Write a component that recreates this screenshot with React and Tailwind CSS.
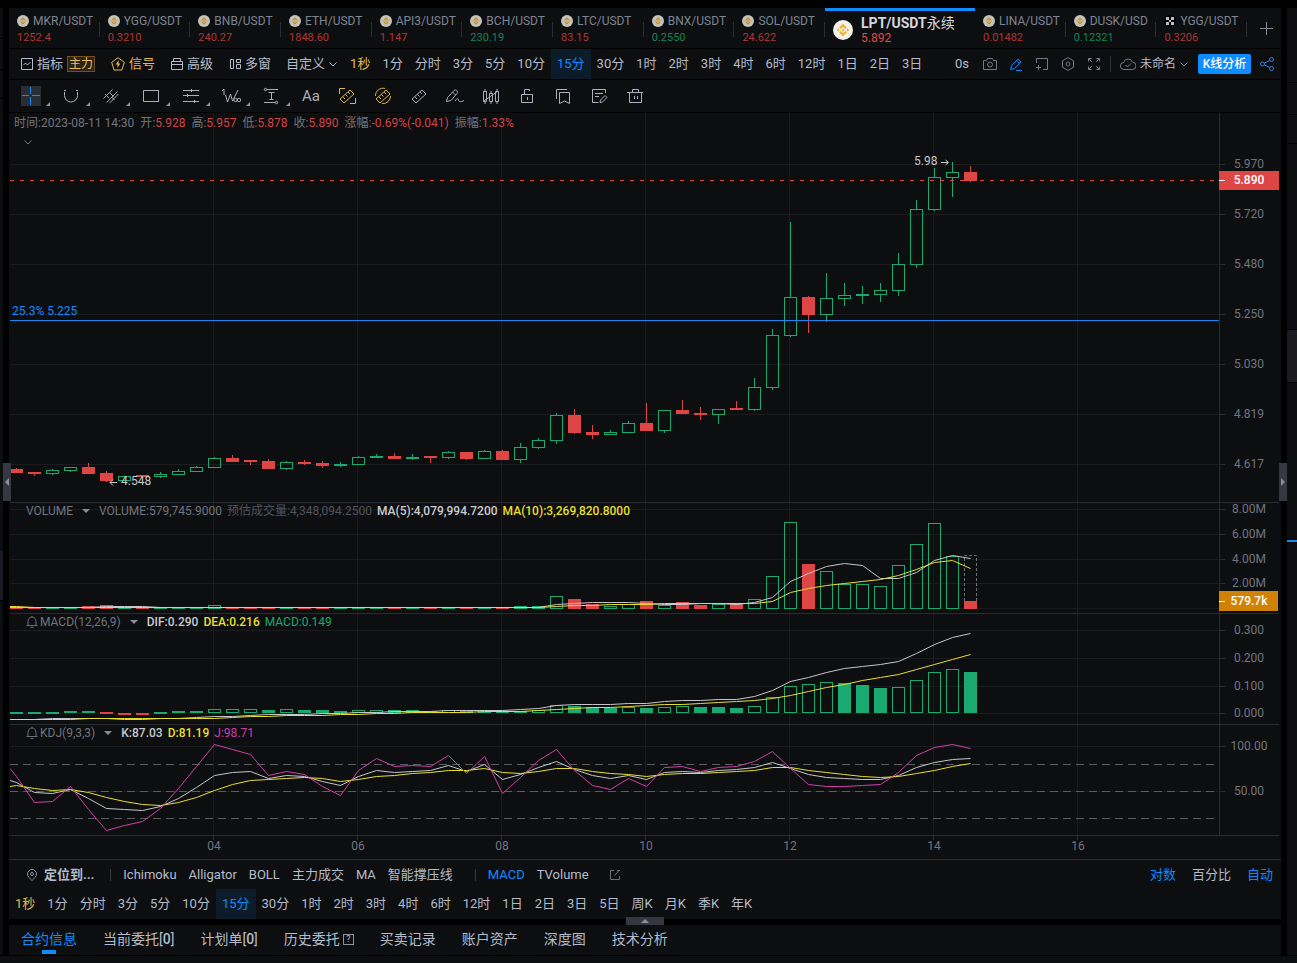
import { useState } from 'react';

const STEP = 18;
const PLOT_COLUMNS = [203, 347, 491, 635, 779, 923, 1067];
const HOURS = ['04', '06', '08', '10', '12', '14', '16'];

const GREEN = '#1aaa71';
const RED = '#de4646';
const WHITE = '#c4c6ca';
const YELLOW = '#e9df2b';
const PINK = '#d03fa8';

// direction, body top, body bottom, high, low
const candles = [
  ['d', 469, 473, 468, 473], ['d', 472, 474, 472, 476], ['u', 470, 474, 469, 475], ['u', 467, 471, 467, 472],
  ['d', 467, 474, 463, 474], ['d', 473, 481, 471, 482], ['u', 476, 481, 476, 481], ['d', 475, 477, 475, 477],
  ['u', 474, 477, 472, 478], ['u', 471, 475, 469, 475], ['u', 467, 472, 466, 472], ['u', 458, 468, 457, 468],
  ['d', 458, 462, 455, 462], ['d', 460, 462, 460, 465], ['d', 461, 469, 459, 469], ['u', 462, 469, 461, 470],
  ['d', 462, 464, 460, 465], ['d', 463, 466, 461, 468], ['u', 464, 466, 462, 467], ['u', 457, 465, 456, 465],
  ['u', 456, 458, 454, 458], ['d', 456, 459, 453, 459], ['u', 457, 459, 454, 460], ['d', 456, 458, 456, 463],
  ['u', 452, 458, 451, 459], ['d', 452, 459, 452, 460], ['u', 451, 459, 450, 459], ['d', 451, 460, 450, 460],
  ['u', 447, 460, 443, 463], ['u', 440, 448, 438, 449], ['u', 415, 441, 413, 444], ['d', 415, 433, 409, 434],
  ['d', 432, 435, 425, 439], ['u', 432, 435, 430, 435], ['u', 423, 433, 421, 433], ['d', 423, 431, 403, 431],
  ['u', 410, 431, 410, 433], ['d', 410, 414, 400, 414], ['d', 413, 415, 407, 420], ['u', 409, 415, 409, 424],
  ['d', 408, 410, 401, 410], ['u', 387, 410, 378, 411], ['u', 335, 388, 329, 390], ['u', 297, 336, 222, 337],
  ['d', 297, 315, 296, 333], ['u', 298, 315, 273, 322], ['u', 295, 299, 283, 306], ['u', 294, 296, 286, 304],
  ['u', 290, 295, 283, 302], ['u', 264, 291, 253, 296], ['u', 209, 265, 200, 268], ['u', 177, 210, 168, 211],
  ['u', 172, 178, 162, 197], ['d', 172, 181, 166, 182],
];

const volumeTops = [
  607, 607, 607, 607, 606, 605, 607, 607, 607, 607, 607, 605, 607, 607, 607, 607, 607, 607,
  607, 607, 607, 607, 607, 607, 607, 607, 607, 607, 606, 606, 596, 599, 604, 606, 604, 601,
  605, 602, 605, 604, 603, 599, 576, 522, 564, 571, 584, 584, 586, 565, 544, 523, 556, 601,
];
const volumeMa5 = [
  607, 607, 607, 607, 607, 606, 606, 606, 607, 607, 607, 607, 607, 607, 607, 607, 607, 607,
  607, 607, 607, 607, 607, 607, 607, 607, 607, 607, 607, 607, 604, 603, 602, 602, 602, 603,
  604, 604, 603, 603, 604, 602, 597, 581, 573, 566, 563, 565, 578, 578, 572, 560, 555, 558,
];
const volumeMa10 = [
  606, 607, 607, 607, 607, 607, 607, 607, 607, 607, 607, 607, 607, 607, 607, 607, 607, 607,
  607, 607, 607, 607, 607, 607, 607, 607, 607, 607, 607, 607, 606, 605, 605, 604, 604, 604,
  603, 603, 603, 603, 603, 603, 601, 592, 588, 585, 583, 581, 579, 575, 569, 562, 560, 568,
];

// h = hollow, f = filled, r = negative
const macdBars = [
  ['f', 712], ['f', 712], ['f', 712], ['f', 711], ['f', 711], ['r', 712], ['r', 713], ['r', 713], ['f', 712],
  ['f', 711], ['f', 711], ['h', 709], ['h', 709], ['h', 709], ['f', 710], ['h', 709], ['f', 710], ['f', 710],
  ['f', 711], ['h', 710], ['h', 710], ['f', 710], ['f', 710], ['f', 711], ['h', 710], ['f', 711], ['h', 710],
  ['f', 711], ['f', 711], ['h', 710], ['h', 705], ['f', 706], ['f', 707], ['f', 708], ['h', 707], ['f', 708],
  ['h', 707], ['h', 706], ['f', 707], ['f', 707], ['f', 708], ['h', 706], ['h', 697], ['h', 686], ['h', 684],
  ['h', 682], ['f', 683], ['f', 685], ['f', 688], ['h', 687], ['h', 680], ['h', 672], ['h', 669], ['f', 672],
];
const dif = [
  719, 719, 718, 718, 718, 718, 719, 719, 718, 718, 717, 716, 716, 715, 714, 714, 714, 713,
  713, 712, 712, 711, 711, 711, 710, 710, 710, 710, 709, 708, 705, 704, 704, 704, 703, 703,
  701, 700, 700, 699, 699, 696, 690, 681, 677, 672, 668, 666, 664, 661, 653, 644, 637, 633,
];
const dea = [
  719, 719, 719, 719, 718, 718, 718, 718, 718, 718, 718, 718, 717, 716, 716, 715, 715, 715,
  714, 714, 713, 713, 712, 712, 712, 712, 711, 711, 711, 710, 709, 708, 707, 707, 706, 705,
  704, 704, 703, 702, 701, 700, 698, 695, 691, 687, 684, 680, 677, 674, 669, 664, 659, 654,
];
const kLine = [
  782, 792, 793, 789, 798, 808, 809, 810, 806, 798, 787, 775, 772, 771, 778, 775, 776, 781,
  785, 776, 770, 772, 771, 770, 765, 771, 764, 779, 774, 767, 761, 769, 775, 778, 775, 779,
  772, 771, 772, 770, 769, 767, 762, 768, 774, 777, 778, 779, 779, 775, 767, 762, 759, 758,
];
const dLine = [
  785, 788, 790, 789, 792, 797, 801, 804, 805, 802, 797, 790, 784, 780, 779, 778, 777, 778,
  781, 779, 776, 775, 773, 772, 770, 770, 768, 772, 773, 771, 768, 768, 771, 773, 774, 776,
  774, 773, 773, 772, 771, 770, 767, 767, 770, 772, 774, 776, 777, 776, 773, 770, 766, 763,
];
const jLine = [
  776, 802, 801, 786, 809, 830, 825, 821, 808, 788, 766, 744, 749, 754, 775, 771, 774, 786,
  795, 770, 758, 766, 765, 766, 755, 773, 756, 793, 777, 760, 749, 770, 785, 789, 778, 786,
  767, 766, 771, 767, 766, 761, 751, 768, 784, 786, 786, 785, 784, 772, 755, 747, 744, 748,
];

const tabsBefore = [
  { name: 'MKR/USDT', price: '1252.4' },
  { name: 'YGG/USDT', price: '0.3210' },
  { name: 'BNB/USDT', price: '240.27' },
  { name: 'ETH/USDT', price: '1848.60' },
  { name: 'API3/USDT', price: '1.147' },
  { name: 'BCH/USDT', price: '230.19', up: true },
  { name: 'LTC/USDT', price: '83.15' },
  { name: 'BNX/USDT', price: '0.2550', up: true },
  { name: 'SOL/USDT', price: '24.622' },
];
const tabsAfter = [
  { name: 'LINA/USDT', price: '0.01482' },
  { name: 'DUSK/USD', price: '0.12321', up: true },
  { name: 'YGG/USDT', price: '0.3206', okx: true },
];

const topPeriods = ['1秒', '1分', '分时', '3分', '5分', '10分', '15分', '30分', '1时', '2时', '3时', '4时', '6时', '12时', '1日', '2日', '3日'];
const bottomPeriods = [...topPeriods, '5日', '周K', '月K', '季K', '年K'];

function BinanceLogo({ className }) {
  return (
    <svg className={className} viewBox="0 0 24 24">
      <circle cx="12" cy="12" r="12" fill="#f4f1ea" />
      <g fill="#f0b01e">
        <path d="M12 4.6l4.6 4.6-1.7 1.7L12 8l-2.9 2.9-1.7-1.7z" />
        <path d="M12 19.4l-4.6-4.6 1.7-1.7L12 16l2.9-2.9 1.7 1.7z" />
        <path d="M12 10.2l1.8 1.8-1.8 1.8-1.8-1.8z" />
        <path d="M6.3 10.3L8 12l-1.7 1.7L4.6 12zM17.7 10.3l1.7 1.7-1.7 1.7L16 12z" />
      </g>
    </svg>
  );
}

function OkxLogo({ className }) {
  return (
    <svg className={className} viewBox="0 0 12 12">
      <circle cx="6" cy="6" r="6" fill="#000" />
      <path fill="#e8e9ec" d="M2 2h3v3H2zM7 2h3v3H7zM5 5h2v2H5zM2 7h3v3H2zM7 7h3v3H7z" />
    </svg>
  );
}

function Icon({ children, size = 'size-4', box = 16, className = '' }) {
  return (
    <svg className={`${size} shrink-0 ${className}`} viewBox={`0 0 ${box} ${box}`} fill="none" stroke="currentColor">
      {children}
    </svg>
  );
}

function Chevron({ className = '' }) {
  return (
    <svg className={`h-2 w-2 shrink-0 ${className}`} viewBox="0 0 8 8" fill="none" stroke="currentColor">
      <path d="M0.5 2.5L4 6l3.5-3.5" />
    </svg>
  );
}

function Caret() {
  return <svg className="h-1 w-2 shrink-0" viewBox="0 0 8 4"><path d="M0 0h8L4 4z" fill="#888d99" /></svg>;
}

function Bell() {
  return (
    <svg className="size-3 shrink-0" viewBox="0 0 12 12" fill="none" stroke="#6c717c">
      <path d="M0.5 9.5h11M2 9.5V5.5a4 4.5 0 0 1 8 0v4M4.5 11.5h3M6 0v1" />
    </svg>
  );
}

function SymbolTab({ tab }) {
  const Logo = tab.okx ? OkxLogo : BinanceLogo;
  return (
    <button className="relative flex h-10 min-w-0 flex-1 flex-col pt-1 pl-2 text-left after:absolute after:top-[14px] after:right-0 after:h-[15px] after:w-px after:bg-[#2b2d33] last-of-type:after:hidden">
      <span className="flex items-center gap-1 text-xs leading-[18px] whitespace-nowrap text-[#7d8593]">
        <Logo className="size-3 shrink-0 opacity-80" />
        {tab.name}
      </span>
      <span className={`text-[11px] leading-4 ${tab.up ? 'text-[#148557]' : 'text-[#ad3638]'}`}>{tab.price}</span>
    </button>
  );
}

function TabBar() {
  return (
    <header className="flex h-[41px] border-b border-black">
      {tabsBefore.map(tab => <SymbolTab key={tab.name} tab={tab} />)}
      <button className="flex h-10 w-[150px] shrink-0 items-center gap-2 border-t-[3px] border-[#0f8cff] pl-2 text-left">
        <BinanceLogo className="size-5 shrink-0" />
        <span className="flex flex-col">
          <span className="text-sm leading-4 font-bold text-[#d4d7dc]">LPT/USDT<span className="font-normal">永续</span></span>
          <span className="text-xs leading-[14px] text-[#e04a4a]">5.892</span>
        </span>
      </button>
      {tabsAfter.map(tab => <SymbolTab key={tab.name} tab={tab} />)}
      <button aria-label="添加" className="flex w-[34px] shrink-0 items-center justify-center pl-1 text-[#858995]">
        <Icon size="size-[14px]" box={14}><path d="M7.5 1v13M1 7.5h13" /></Icon>
      </button>
    </header>
  );
}

function Periods({ items, active, onChange }) {
  return items.map(p => (
    <button
      key={p}
      onClick={() => onChange(p)}
      className={`h-[30px] px-[6px] whitespace-nowrap ${p === active ? 'bg-[#0c1c2a] text-[#0f8cff]' : p === '1秒' ? 'text-[#e3b94b]' : ''}`}
    >
      {p}
    </button>
  ));
}

function Toolbar({ period, setPeriod }) {
  return (
    <div className="flex h-[31px] items-center border-b border-black pr-[6px] pl-3 text-[13px] text-[#b4bccb]">
      <button className="flex items-center gap-1">
        <Icon size="size-3" box={12}><path d="M0.5 0.5h11v11H0.5zM2.5 7l2-2 2 2 3-3" /></Icon>
        指标
        <span className="flex h-4 w-7 items-center justify-center border border-[#6e5327] bg-[#2c2418] text-xs text-[#eebd5e]">主力</span>
      </button>
      <button className="ml-4 flex items-center gap-1 text-[#e3b94b]">
        <Icon size="size-[14px]" box={14}>
          <path d="M7 0.7l6.3 4.6-2.4 7.7H3.1L0.7 5.3z" />
          <path d="M7.8 3L4.6 7.4h2L6.2 11l3.2-4.6h-2z" fill="currentColor" stroke="none" />
        </Icon>
        信号
      </button>
      <button className="ml-4 flex items-center gap-1">
        <Icon size="size-3" box={12}><path d="M0.5 3.5h11v8H0.5zM0.5 6.5h11M2.5 3.5v-3h7v3" /></Icon>
        高级
      </button>
      <button className="ml-4 flex items-center gap-1">
        <Icon size="size-3" box={12}><path d="M1.5 1.5h3v9h-3zM7.5 1.5h4v3h-4zM7.5 6.5h4v4h-4z" /></Icon>
        多窗
      </button>
      <button className="mr-[7px] ml-[15px] flex items-center gap-1">
        自定义
        <Chevron />
      </button>
      <Periods items={topPeriods} active={period} onChange={setPeriod} />
      <div className="ml-auto flex items-center text-[#747985]">
        <span className="mr-[14px] text-[#b4bccb]">0s</span>
        <button aria-label="截图" className="mr-3">
          <Icon size="size-[14px]" box={14}><path d="M0.5 3.5h3l1-2h5l1 2h3v9H0.5z" /><circle cx="7" cy="7.5" r="2.5" /></Icon>
        </button>
        <button aria-label="画线" className="mr-3 text-[#0f8cff]">
          <Icon size="size-[14px]" box={14}><path d="M1.5 12.5l1-4L9 2l3 3-6.5 6.5zM7.5 3.5l3 3M7 13.5h6" /></Icon>
        </button>
        <button aria-label="窗口" className="mr-3">
          <Icon size="size-[14px]" box={14}><path d="M1.5 6V1.5h11v11H8M3.5 8v5M1 10.5h5" /></Icon>
        </button>
        <button aria-label="设置" className="mr-3">
          <Icon size="size-[14px]" box={14}><path d="M7 0.6l5.5 3.2v6.4L7 13.4 1.5 10.2V3.8z" /><circle cx="7" cy="7" r="2" /></Icon>
        </button>
        <button aria-label="全屏">
          <Icon size="size-[14px]" box={14}><path d="M1.5 4.5v-3h3M1.5 1.5L5 5M9.5 1.5h3v3M12.5 1.5L9 5M1.5 9.5v3h3M1.5 12.5L5 9M9.5 12.5h3v-3M12.5 12.5L9 9" /></Icon>
        </button>
        <span className="mx-[9px] h-4 w-px bg-[#2f3138]" />
        <button className="flex items-center gap-1">
          <Icon><path d="M4 13.5a3.5 3.5 0 0 1-.3-7 4.5 4.5 0 0 1 8.7-.4 3.7 3.7 0 0 1-.2 7.4zM5.5 9l2 2L11 7.5" /></Icon>
          <span className="text-xs text-[#b4bccb]">未命名</span>
          <Chevron />
        </button>
        <button className="mr-2 ml-[10px] h-5 w-[53px] rounded-xs bg-[#0f8cff] text-xs font-medium text-white">K线分析</button>
        <button aria-label="分享" className="text-[#2b7de0]">
          <Icon><circle cx="3.5" cy="8" r="2" /><circle cx="12.5" cy="3.5" r="2" /><circle cx="12.5" cy="12.5" r="2" /><path d="M5.3 7.1l5.4-2.7M5.3 8.9l5.4 2.7" /></Icon>
        </button>
      </div>
    </div>
  );
}

const RULER = 'M3 13L13 4l4 4L7 17zM6 11l2 2M8.5 8.5l2 2M11 6l2 2';

const menuTools = [
  { label: '十字光标', active: true, art: <path d="M9.5 1v7M9.5 11v8M1 9.5h7M11 9.5h8" /> },
  { label: '磁铁', art: <path d="M3.5 6v3.5a6.5 6.5 0 0 0 13 0V6M3 4.5h2M15 4.5h2" /> },
  { label: '趋势线', art: <path d="M2.5 12.5l9-9M5.5 16.5l11-11M8.5 17l9-9M4 8l4 4M8.5 6.5l4 4M10.5 11l3 3" /> },
  { label: '矩形', art: <path d="M2.5 4.5h15v11h-15z" /> },
  { label: '水平线', art: <path d="M2 4.5h16M2 9.5h16M2 15.5h16M10.5 3v3M6.5 8v3M13.5 14v3" /> },
  { label: '波浪线', art: <><path d="M1 5l2-2v6M4.5 9l2 7 3-8 2 7L17 4" /><circle cx="14.5" cy="14" r="1.7" /><circle cx="18" cy="14" r="1.7" /></> },
  { label: '测距', art: <><path d="M6 3.5h11M3 16.5h11M10.5 6.5v7M7.5 6.5h6M8.5 13.5h4" /><circle cx="4.5" cy="3.5" r="1.2" /><circle cx="15.5" cy="16.5" r="1.2" /></> },
];

const plainTools = [
  { label: '尺子', gold: true, art: <><path d={RULER} /><path d="M2.5 8V2.5H8M18.5 12v5.5H13" /></> },
  { label: '圆形尺', gold: true, art: <><path d={RULER} /><path d="M2.5 10A7.5 7.5 0 0 1 12 2.5M17.5 10A7.5 7.5 0 0 1 9 17.5" /></> },
  { label: '刻度尺', art: <path d={RULER} /> },
  { label: '画笔', art: <path d="M1.5 15.5l1-4L9 4.5c2-1.5 4.5.5 3 3L6 14.5zM7.5 6l3 3M10 15c2-3 3-3 3.5-1s2 2.5 5.5.5" /> },
  { label: 'K线', art: <path d="M2.5 5.5h3v10h-3zM8.5 7.5h3v8h-3zM14.5 5.5h3v10h-3zM4 3v2.5M4 15.5V18M10 5v2.5M10 15.5V18M16 3v2.5M16 15.5V18M3 15L17 5" /> },
  { label: '锁定', art: <path d="M4.5 8.5h11v8h-11zM7.5 8.5v-5h5v1.5M10.5 11v3" /> },
  { label: '书签', art: <path d="M6.5 6.5h10v11l-5-2.5-5 2.5zM3.5 13V3.5H14" /> },
  { label: '笔记', art: <path d="M16.5 7V3.5H3.5v13h6M6 7.5h8M6 10.5h4M11 16.5l.5-2.5 4.5-4.5 2 2-4.5 4.5z" /> },
  { label: '删除', art: <path d="M2 6.5h16M4.5 6.5v10h12v-10M7.5 6V3.5h6V6M9.5 10v3M12.5 10v3" /> },
];

function DrawingTools() {
  return (
    <div className="flex h-[33px] items-center border-b border-black pl-3 text-[#a9afbc]">
      <div className="flex gap-5 pr-5">
        {menuTools.map(t => (
          <button key={t.label} aria-label={t.label} className={`relative size-5 ${t.active ? 'bg-[#2b2d35] text-[#0f8cff]' : ''}`}>
            <Icon size="size-5" box={20}>{t.art}</Icon>
            <svg className="absolute -right-[9px] bottom-0 size-1" viewBox="0 0 4 4"><path d="M4 0v4H0z" fill="#8a8fa0" /></svg>
          </button>
        ))}
      </div>
      <div className="flex gap-4">
        <button className="size-5 text-[15px] leading-5">Aa</button>
        {plainTools.map(t => (
          <button key={t.label} aria-label={t.label} className={t.gold ? 'text-[#dcb447]' : ''}>
            <Icon size="size-5" box={20}>{t.art}</Icon>
          </button>
        ))}
      </div>
    </div>
  );
}

function Line({ data, color, start }) {
  const pts = data.map((y, i) => `${6.5 + i * STEP},${y + 0.5}`);
  return <polyline points={[`0,${start + 0.5}`, ...pts].join(' ')} fill="none" stroke={color} />;
}

function Box({ i, top, bottom, color, hollow }) {
  const x = i * STEP;
  return hollow && bottom - top > 2
    ? <rect x={x + 0.5} y={top + 0.5} width="12" height={bottom - top - 1} fill="none" stroke={color} />
    : <rect x={x} y={top} width="13" height={bottom - top} fill={color} />;
}

function Pane({ top, size, ticks, rows, legend, children, tag }) {
  return (
    <section className={`flex border-b border-[#2a2b30] ${size}`}>
      <div className="relative min-w-0 flex-1">
        <svg className="block h-full w-full">
          <g transform={`translate(0 ${-top})`}>
            {PLOT_COLUMNS.map(x => <rect key={x} x={x} y={top} width="1" height="400" fill="#1b1c1f" />)}
            {rows.map(y => <rect key={y} x="0" y={y} width="100%" height="1" fill="#1b1c1f" />)}
            {children}
          </g>
        </svg>
        {legend}
      </div>
      <svg className="block h-full w-[60px] shrink-0">
        <g transform={`translate(0 ${-top})`}>
          <rect x="0" y={top} width="1" height="400" fill="#2a2b30" />
          {ticks.map(([y, label]) => (
            <g key={label}>
              <rect x="0" y={y} width="6" height="1" fill="#2a2b30" />
              <text x="30" y={y + 4} textAnchor="middle" className="fill-[#70757f] text-xs">{label}</text>
            </g>
          ))}
          {tag && (
            <g>
              <rect x="0" y={tag.top} width={tag.width} height={tag.height} fill={tag.color} />
              <rect x="0" y={tag.y} width="6" height="1" fill="#fff" />
              <text x="30" y={tag.y + 4} textAnchor="middle" className="fill-white text-xs font-medium">{tag.label}</text>
            </g>
          )}
        </g>
      </svg>
    </section>
  );
}

function Legend({ bell, name, children }) {
  return (
    <div className="absolute top-0 left-4 flex h-4 items-center gap-[5px] text-xs whitespace-nowrap text-[#70757f]">
      <button className="mr-1 flex items-center gap-[9px]">
        <span className="flex items-center gap-[2px]">{bell && <Bell />}{name}</span>
        <Caret />
      </button>
      {children}
    </div>
  );
}

function PricePane() {
  const quotes = [['开', '5.928'], ['高', '5.957'], ['低', '5.878'], ['收', '5.890'], ['涨幅', '-0.69%(-0.041)'], ['振幅', '1.33%']];
  return (
    <Pane
      top={113}
      size="h-[390px]"
      rows={[164, 214, 264, 314, 364, 414, 464]}
      ticks={[[164, '5.970'], [214, '5.720'], [264, '5.480'], [314, '5.250'], [364, '5.030'], [414, '4.819'], [464, '4.617']]}
      tag={{ y: 180, top: 171, width: 60, height: 19, color: RED, label: '5.890' }}
      legend={
        <div className="absolute top-0 left-1 text-xs text-[#70757f]">
          <div className="flex h-5 items-center gap-[6px] whitespace-nowrap">
            <span>时间:2023-08-11 14:30</span>
            {quotes.map(([k, v]) => <span key={k}>{k}:<span className="text-[#d34346]">{v}</span></span>)}
          </div>
          <button aria-label="展开" className="mt-[5px] ml-[10px] block"><Chevron /></button>
        </div>
      }
    >
      {candles.map(([dir, top, bottom, high, low], i) => {
        const color = dir === 'u' ? GREEN : RED;
        return (
          <g key={i}>
            <rect x={i * STEP + 6} y={high} width="1" height={top - high} fill={color} />
            <rect x={i * STEP + 6} y={bottom} width="1" height={low - bottom} fill={color} />
            <Box i={i} top={top} bottom={bottom} color={color} hollow={dir === 'u'} />
          </g>
        );
      })}
      <line x1="0" x2="100%" y1="180.5" y2="180.5" stroke={RED} strokeDasharray="4 6" />
      <rect x="0" y="320" width="100%" height="1" fill="#1a86f0" />
      <text x="2" y="315" className="fill-[#0f8cff] text-xs">25.3% 5.225</text>
      <text x="111" y="485" className="fill-[#c8cbd0] text-xs">4.548</text>
      <path d="M100 482.5h7M103 479.5l-3 3 3 3" fill="none" stroke="#c8cbd0" />
      <text x="904" y="165" className="fill-[#c8cbd0] text-xs">5.98</text>
      <path d="M931 162.5h7M935.5 160l3 2.5-3 2.5" fill="none" stroke="#c8cbd0" />
    </Pane>
  );
}

function VolumePane() {
  return (
    <Pane
      top={503}
      size="h-[111px]"
      rows={[509, 534, 559, 583, 608]}
      ticks={[[509, '8.00M'], [534, '6.00M'], [559, '4.00M'], [583, '2.00M']]}
      tag={{ y: 601, top: 591, width: 59, height: 20, color: '#d08206', label: '579.7k' }}
      legend={
        <Legend name="VOLUME">
          <span>VOLUME:579,745.9000</span>
          <span className="text-[#50545c]">预估成交量:4,348,094.2500</span>
          <span className="font-medium text-[#c8cbd0]">MA(5):4,079,994.7200</span>
          <span className="font-medium text-[#e9df2b]">MA(10):3,269,820.8000</span>
        </Legend>
      }
    >
      {volumeTops.map((top, i) => (
        <Box key={i} i={i} top={top} bottom={609} color={candles[i][0] === 'u' ? GREEN : RED} hollow={candles[i][0] === 'u'} />
      ))}
      <path d="M954.5 601V555.5h12V601" fill="none" stroke="#6d7077" strokeDasharray="3 2" />
      <Line data={volumeMa5} color={WHITE} start={607} />
      <Line data={volumeMa10} color={YELLOW} start={606} />
    </Pane>
  );
}

function MacdPane() {
  return (
    <Pane
      top={614}
      size="h-[111px]"
      rows={[630, 658, 686, 713]}
      ticks={[[630, '0.300'], [658, '0.200'], [686, '0.100'], [713, '0.000']]}
      legend={
        <Legend bell name="MACD(12,26,9)">
          <span className="font-medium text-[#c8cbd0]">DIF:0.290</span>
          <span className="font-medium text-[#e9df2b]">DEA:0.216</span>
          <span className="text-[#1aaa71]">MACD:0.149</span>
        </Legend>
      }
    >
      {macdBars.map(([kind, top], i) => (
        <Box key={i} i={i} top={top} bottom={Math.max(top + 2, 713)} color={kind === 'r' ? RED : GREEN} hollow={kind === 'h'} />
      ))}
      <Line data={dif} color={WHITE} start={719} />
      <Line data={dea} color={YELLOW} start={719} />
    </Pane>
  );
}

function KdjPane() {
  return (
    <Pane
      top={725}
      size="h-[111px]"
      rows={[746, 791]}
      ticks={[[746, '100.00'], [791, '50.00']]}
      legend={
        <Legend bell name="KDJ(9,3,3)">
          <span className="font-medium text-[#c8cbd0]">K:87.03</span>
          <span className="font-medium text-[#e9df2b]">D:81.19</span>
          <span className="text-[#d03fa8]">J:98.71</span>
        </Legend>
      }
    >
      {[764, 791, 818].map(y => (
        <line key={y} x1="0" x2="100%" y1={y + 0.5} y2={y + 0.5} stroke="#595d64" strokeDasharray="8 5" />
      ))}
      <Line data={kLine} color={WHITE} start={780} />
      <Line data={dLine} color={YELLOW} start={786} />
      <Line data={jLine} color={PINK} start={768} />
    </Pane>
  );
}

function TimeAxis() {
  return (
    <svg className="block h-[23px] w-full">
      {HOURS.map((h, i) => (
        <g key={h}>
          <rect x={PLOT_COLUMNS[i]} y="0" width="1" height="4" fill="#2a2b30" />
          <text x={PLOT_COLUMNS[i] + 1} y="14" textAnchor="middle" className="fill-[#70757f] text-xs">{h}</text>
        </g>
      ))}
    </svg>
  );
}

function IndicatorRow() {
  return (
    <div className="box-content flex h-[29px] items-center border-t border-[#2f3035] pr-2 pl-[17px] text-[13px] text-[#b4bccb]">
      <button className="flex items-center gap-[6px] font-bold">
        <Icon size="size-3" box={12} className="text-[#8d919b]">
          <path d="M6 11.5C3.5 9 1.5 7.5 1.5 5a4.5 4.5 0 0 1 9 0c0 2.5-2 4-4.5 6.5z" /><circle cx="6" cy="5" r="1.5" />
        </Icon>
        定位到...
      </button>
      <span className="mr-3 ml-4 h-3 w-px bg-[#363840]" />
      <div className="flex gap-3 whitespace-nowrap">
        {['Ichimoku', 'Alligator', 'BOLL', '主力成交', 'MA', '智能撑压线'].map(n => <button key={n}>{n}</button>)}
      </div>
      <span className="mr-3 ml-[22px] h-3 w-px bg-[#363840]" />
      <div className="flex gap-3">
        <button className="text-[#0f8cff]">MACD</button>
        <button>TVolume</button>
      </div>
      <button aria-label="编辑" className="ml-5 text-[#6a6e77]">
        <Icon size="size-3" box={12}><path d="M5 1.5H1.5v9h9V7M5.5 6.5l5-5.5M8 1.5h3" /></Icon>
      </button>
      <div className="ml-auto flex gap-4">
        <button className="text-[#0f8cff]">对数</button>
        <button>百分比</button>
        <button className="text-[#0f8cff]">自动</button>
      </div>
    </div>
  );
}

function FooterTabs() {
  const tabs = ['合约信息', '当前委托', '计划单', '历史委托', '买卖记录', '账户资产', '深度图', '技术分析'];
  return (
    <nav className="flex h-[30px] items-stretch gap-[26px] bg-[#0d0e10] pl-3 text-sm whitespace-nowrap text-[#b4bccb]">
      {tabs.map((t, i) => (
        <button key={t} className={`relative flex items-center pb-0.5 ${i === 0 ? 'text-[#0f8cff]' : ''}`}>
          {t}
          {(i === 1 || i === 2) && <span>[<span className="font-medium">0</span>]</span>}
          {i === 3 && <span className="ml-[3px] flex size-[11px] items-center justify-center border border-[#8d919b] text-[9px] leading-none">?</span>}
          {i === 0 && <span className="absolute bottom-px left-[21px] h-1 w-[14px] bg-[#0f8cff]" />}
        </button>
      ))}
    </nav>
  );
}

export default function App() {
  const [period, setPeriod] = useState('15分');

  return (
    <div className="flex min-h-screen flex-col bg-black pt-2 font-['Roboto','Noto_Sans_CJK_SC',sans-serif]">
      <div className="flex">
        <aside className="flex w-[3px] shrink-0 flex-col gap-px">
          <div className="h-[30px] bg-[#0d0e10]" />
          <div className="h-[30px] bg-[#0d0e10]" />
          <div className="h-[28px] bg-[#0d0e10]" />
          <div className="h-[450px] bg-[#0d0e10]" />
          <div className="h-[50px] bg-[#1b1c21]" />
          <div className="flex-1 bg-[#0d0e10]" />
        </aside>

        <main className="relative mx-[6px] min-w-0 flex-1">
          <div className="bg-[#0d0e10]">
            <TabBar />
            <Toolbar period={period} setPeriod={setPeriod} />
            <DrawingTools />
            <div className="pr-[2px] pl-px">
              <PricePane />
              <VolumePane />
              <MacdPane />
              <KdjPane />
              <TimeAxis />
            </div>
            <IndicatorRow />
            <div className="flex h-[30px] text-[13px] text-[#b4bccb]">
              <Periods items={bottomPeriods} active={period} onChange={setPeriod} />
            </div>
          </div>
          <div className="h-[6px]" />
          <FooterTabs />

          <button aria-label="收起左栏" className="absolute top-[455px] -left-[6px] flex h-[38px] w-2 items-center justify-center bg-[#363741]">
            <svg className="h-2 w-1" viewBox="0 0 4 8"><path d="M4 0v8L0 4z" fill="#8b8e98" /></svg>
          </button>
          <button aria-label="收起右栏" className="absolute top-[455px] -right-[6px] flex h-[38px] w-2 items-center justify-center bg-[#363741]">
            <svg className="h-2 w-1" viewBox="0 0 4 8"><path d="M0 0v8l4-4z" fill="#8b8e98" /></svg>
          </button>
          <button aria-label="收起底栏" className="absolute bottom-[30px] left-1/2 -ml-[19px] flex h-2 w-[38px] items-center justify-center bg-[#363741]">
            <svg className="h-1 w-2" viewBox="0 0 8 4"><path d="M0 4h8L4 0z" fill="#8b8e98" /></svg>
          </button>
        </main>

        <aside className="flex w-[10px] shrink-0 flex-col gap-px">
          <div className="h-[74px] bg-[#0d0e10]" />
          <div className="h-[31px] bg-[#0d0e10]" />
          <div className="h-[28px] bg-[#0d0e10]" />
          <div className="h-[185px] bg-[#0d0e10]" />
          <div className="h-[52px] bg-[#1b1c21]" />
          <div className="h-[156px] bg-[#0d0e10]" />
          <div className="h-[2px] bg-[#0f8cff]" />
          <div className="flex-1 bg-[#0d0e10]" />
        </aside>
      </div>
      <div className="mt-px min-h-[7px] flex-1 bg-[#0d0e10]" />
    </div>
  );
}
